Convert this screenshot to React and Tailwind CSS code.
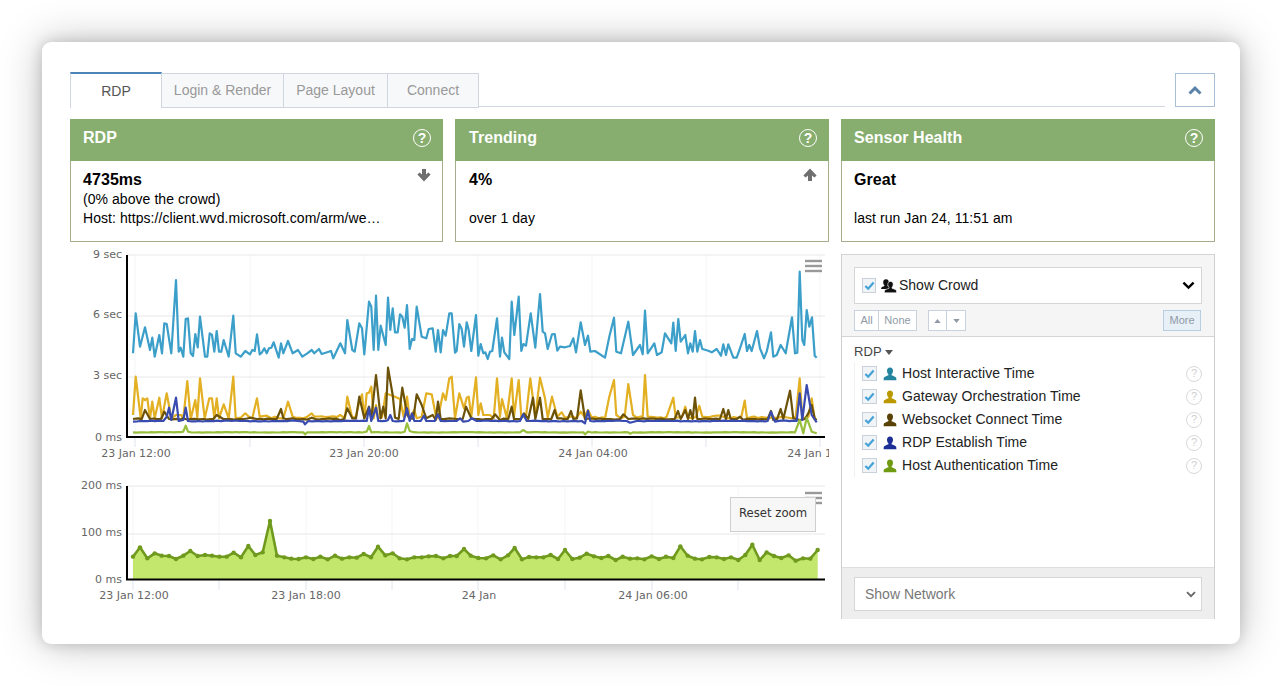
import React from "react";

const Z3X = (x) => 70 + x / 3;
const Z4X = (x) => 450 + x / 3;
const Y = (y) => 245 + y / 3;

function organic(pts, base, amp) {
  if (base === null) return pts;
  const spiked = [];
  pts.forEach((a, i) => {
    spiked.push(a);
    const b = pts[i + 1];
    if (!b) return;
    if (b[0] - a[0] > 24) {
      if (Math.abs(a[1] - base) > 4) spiked.push([a[0] + 10, base]);
      if (Math.abs(b[1] - base) > 4) spiked.push([b[0] - 10, base]);
    }
  });
  const out = [];
  spiked.forEach((a, i) => {
    out.push(a);
    const b = spiked[i + 1];
    if (!b) return;
    if (b[0] - a[0] > 20) {
      for (let x = a[0] + 11; x < b[0] - 6; x += 11) {
        out.push([x, base + amp * Math.sin(x * 0.73) * Math.cos(x * 0.19)]);
      }
    }
  });
  return out;
}

const line = (a, b, base = null, amp = 0) =>
  [
    ...organic(a, base, amp).map(([x, y]) => [Z3X(x), Y(y)]),
    ...organic(b, base, amp).map(([x, y]) => [Z4X(x), Y(y)]),
  ]
    .map((p) => p.map((n) => n.toFixed(1)).join(","))
    .join(" ");

const blue = line(
  [[189,325],[197,205],[210,305],[225,247],[240,315],[247,278],[254,335],[268,270],[276,325],[283,235],[290,237],[304,325],[318,105],[326,320],[332,308],[340,335],[347,222],[354,220],[362,325],[369,333],[376,267],[383,307],[390,215],[405,335],[412,335],[419,265],[426,270],[433,320],[440,258],[447,320],[454,320],[461,285],[476,335],[490,212],[497,325],[512,335],[526,318],[540,328],[547,315],[554,318],[561,268],[569,328],[576,322],[583,310],[590,325],[597,310],[604,308],[611,292],[626,338],[633,295],[640,325],[654,288],[668,325],[684,315],[697,335],[712,325],[725,315],[733,325],[747,312],[755,327],[783,318],[790,340],[811,295],[825,325],[832,225],[847,315],[854,320],[868,235],[876,250],[883,328],[897,170],[904,185],[911,315],[918,152],[925,315],[932,242],[947,300],[954,158],[961,255],[968,190],[975,262],[983,262],[990,208],[997,215],[1004,248],[1011,180],[1019,312],[1026,282],[1033,285],[1040,185],[1055,275],[1069,280],[1076,252],[1088,250],[1097,320],[1104,255],[1112,322],[1119,255],[1127,272],[1138,205]],
  [[5,205],[15,323],[20,318],[28,237],[35,252],[42,305],[50,232],[56,255],[64,318],[78,210],[85,332],[92,297],[100,325],[106,322],[113,342],[120,320],[127,318],[141,220],[150,335],[156,278],[163,322],[178,342],[185,170],[193,270],[206,155],[214,318],[220,297],[228,302],[242,205],[256,308],[270,147],[278,260],[285,265],[293,312],[306,268],[314,267],[322,317],[330,305],[345,307],[360,303],[370,280],[378,322],[392,232],[405,300],[414,272],[421,320],[435,318],[465,338],[478,275],[492,218],[499,320],[513,325],[535,230],[549,330],[570,300],[578,328],[585,197],[593,325],[613,295],[621,330],[635,322],[645,265],[664,295],[670,233],[677,318],[685,222],[692,290],[706,270],[714,325],[721,295],[728,320],[735,258],[742,320],[750,285],[757,312],[775,317],[785,322],[800,312],[813,332],[820,298],[828,330],[835,298],[850,338],[860,338],[870,310],[884,267],[891,318],[898,300],[905,318],[921,258],[930,310],[942,340],[950,320],[963,262],[970,335],[980,330],[992,300],[1007,325],[1026,217],[1035,325],[1042,323],[1049,80],[1057,285],[1063,300],[1070,195],[1078,245],[1086,217],[1094,332],[1100,338]]
);
const gold = line(
  [[189,510],[197,395],[212,520],[218,460],[225,465],[232,460],[240,520],[247,470],[254,520],[268,458],[276,520],[290,445],[304,520],[318,510],[333,510],[340,520],[352,408],[362,522],[376,465],[382,518],[390,400],[404,520],[418,460],[426,460],[433,520],[440,460],[447,520],[461,478],[476,520],[490,395],[497,520],[512,518],[526,505],[540,518],[547,520],[561,460],[569,515],[590,512],[604,520],[626,520],[640,520],[654,470],[668,515],[700,520],[712,515],[725,505],[733,515],[780,515],[811,510],[825,520],[832,455],[847,520],[868,470],[876,448],[883,520],[890,445],[897,443],[904,425],[911,520],[918,480],[925,520],[947,445],[961,450],[975,455],[990,462],[1011,455],[1019,520],[1033,495],[1040,520],[1055,515],[1069,445],[1085,448],[1097,510],[1104,520],[1119,445],[1127,465],[1138,400]],
  [[5,395],[15,520],[28,445],[42,490],[50,458],[56,455],[64,515],[78,397],[85,510],[92,475],[100,510],[120,510],[141,400],[150,515],[156,462],[170,518],[185,400],[192,515],[206,405],[214,515],[228,515],[241,400],[256,515],[270,398],[285,460],[293,518],[306,455],[322,515],[335,502],[345,518],[378,520],[392,500],[414,495],[435,515],[465,520],[478,455],[492,405],[499,510],[513,520],[535,417],[549,510],[570,515],[578,515],[585,390],[593,515],[621,518],[650,515],[670,458],[677,518],[706,485],[714,518],[748,482],[757,515],[800,512],[830,520],[884,467],[891,520],[1026,520],[1049,400],[1057,520],[1085,460],[1094,525]],
  516, 4
);
const brown = line(
  [[189,522],[204,520],[225,495],[240,522],[283,500],[297,522],[340,520],[400,522],[440,510],[460,522],[510,522],[540,518],[560,522],[620,522],[633,492],[640,520],[668,520],[725,518],[755,522],[811,525],[832,490],[847,520],[868,455],[883,520],[897,485],[904,520],[918,390],[932,520],[940,485],[947,520],[954,368],[968,450],[975,518],[997,428],[1012,510],[1019,520],[1040,448],[1055,480],[1069,520],[1088,510],[1097,525],[1104,470],[1112,522],[1138,520]],
  [[20,522],[48,485],[64,520],[135,508],[150,525],[185,485],[192,522],[222,505],[235,522],[249,458],[256,522],[270,458],[278,522],[314,495],[322,520],[363,498],[370,522],[392,436],[405,522],[520,508],[535,522],[684,498],[692,522],[706,495],[714,522],[721,495],[728,522],[735,458],[742,522],[820,492],[828,522],[835,495],[842,522],[870,515],[880,525],[963,498],[970,525],[992,492],[1000,522],[1020,437],[1030,520],[1049,525],[1075,505],[1085,480],[1094,520],[1100,525]],
  522, 2
);
const navy = line(
  [[189,530],[280,528],[290,515],[297,488],[304,525],[318,458],[326,528],[340,525],[347,488],[354,528],[700,530],[705,538],[715,528],[890,528],[897,488],[904,528],[918,488],[925,528],[954,525],[961,510],[968,528],[1011,490],[1019,528],[1026,505],[1033,528],[1062,512],[1069,528],[1104,508],[1112,528],[1138,528]],
  [[0,528],[30,520],[40,530],[65,520],[80,528],[220,508],[230,528],[405,535],[414,497],[421,528],[540,533],[560,528],[963,500],[975,530],[1040,528],[1049,445],[1057,525],[1070,420],[1085,510],[1100,532]],
  528, 1.5
);
const lime = line(
  [[189,562],[340,560],[347,542],[354,560],[700,562],[705,568],[712,562],[890,560],[897,543],[904,562],[1004,560],[1011,535],[1019,558],[1138,562]],
  [[0,562],[210,562],[220,555],[230,562],[400,562],[405,568],[414,560],[535,562],[540,566],[550,562],[1035,562],[1049,525],[1060,565],[1070,518],[1085,560],[1100,565]],
  562, 1
);

const lowerPts = [
  ...[[189,260],[210,232],[232,265],[254,250],[275,257],[297,258],[318,267],[340,257],[361,243],[383,258],[405,255],[426,257],[448,260],[470,260],[491,248],[513,262],[535,228],[556,255],[578,247],[600,153],[621,257],[643,262],[664,266],[686,267],[708,262],[730,267],[751,260],[773,268],[795,257],[816,266],[838,262],[860,263],[881,252],[903,262],[924,230],[946,256],[968,250],[989,265],[1011,268],[1033,262],[1055,262],[1076,259],[1098,258],[1120,265]].map(([x, y]) => [70 + x / 3, 470 + y / 3]),
  ...[[0,258],[20,258],[42,237],[62,257],[85,264],[108,265],[130,256],[152,268],[174,256],[194,234],[216,268],[237,261],[259,262],[280,262],[302,255],[324,267],[345,240],[367,267],[389,263],[410,251],[432,259],[454,264],[475,258],[497,270],[518,260],[540,266],[562,265],[583,268],[605,259],[627,267],[648,260],[670,264],[691,229],[713,257],[735,266],[756,268],[778,261],[800,262],[822,267],[843,262],[865,270],[886,255],[907,224],[929,270],[950,247],[972,258],[994,264],[1016,256],[1037,272],[1059,265],[1081,266],[1103,240]].map(([x, y]) => [450 + x / 3, 470 + y / 3]),
];
const lowerLine = lowerPts.map((p) => p.map((n) => n.toFixed(1)).join(",")).join(" ");

const axisFont = { fontFamily: "'DejaVu Sans', sans-serif", fontSize: 11, fill: "#666" };

function Help({ muted }) {
  return muted ? (
    <span className="flex h-[16px] w-[16px] items-center justify-center rounded-full border border-[#d9d9d9] text-[11px] leading-none text-[#cfcfcf]">?</span>
  ) : (
    <span className="flex h-[18px] w-[18px] items-center justify-center rounded-full border border-white text-[14px] font-bold leading-none text-white">?</span>
  );
}

const ArrowDown = () => (
  <svg viewBox="0 0 14 14" className="h-[14px] w-[14px]" fill="#6f6f6f">
    <path d="M5 1 H9 V6.5 L11.4 4.4 L13.6 6.6 L7 13.4 L0.4 6.6 L2.6 4.4 L5 6.5 Z" />
  </svg>
);
const ArrowUp = () => (
  <svg viewBox="0 0 14 14" className="h-[14px] w-[14px]" fill="#6f6f6f">
    <path d="M5 13 H9 V7.5 L11.4 9.6 L13.6 7.4 L7 0.6 L0.4 7.4 L2.6 9.6 L5 7.5 Z" />
  </svg>
);

function Card({ title, value, arrow, l2, l3, mid }) {
  return (
    <div className="flex h-[123px] flex-col border border-[#a4ae8c] bg-white">
      <div className={"-mx-px -mt-px flex h-[42px] shrink-0 items-center justify-between bg-[#87ae6e] pb-[4px] " + (mid ? "pl-[14px] pr-[12px] text-white" : "pl-[13px] pr-[12px] text-white")}>
        <span className="text-[16px] font-bold tracking-[0.05px]">{title}</span>
        <Help />
      </div>
      <div className={"relative flex-1 pt-[9px] text-[14px] leading-[19px] tracking-[0.06px] text-black " + (mid ? "pl-[13px]" : "pl-[12px]")}>
        <div className="text-[16px] font-bold leading-[19px]">{value}</div>
        <div className="mt-px h-[19px]">{l2}</div>
        <div>{l3}</div>
        <span className={"absolute top-[7px] " + (mid ? "right-[11px]" : "right-[11px]")}>{arrow}</span>
      </div>
    </div>
  );
}

function Check({ small }) {
  return (
    <span className={"flex shrink-0 items-center justify-center border border-[#c9d2da] bg-[#f1f4f6] " + (small ? "h-[15px] w-[14px]" : "h-[15px] w-[15px]")}>
      <svg viewBox="0 0 12 12" className="h-[11px] w-[11px]">
        <path d="M1.5 6.5 L4.6 9.5 L10.5 2.8" fill="none" stroke="#45a3d8" strokeWidth="2.5" />
      </svg>
    </span>
  );
}

function Person({ color }) {
  return (
    <svg viewBox="0 0 14 14" className="h-[14px] w-[14px] shrink-0" fill={color}>
      <path d="M7 0.5 C9 0.5 10 2 10 3.8 C10 5.4 9.4 6.6 8.6 7.3 L8.6 8.3 C10.5 9 12.6 9.8 13.2 10.8 L13.4 13.2 L0.6 13.2 L0.8 10.8 C1.4 9.8 3.5 9 5.4 8.3 L5.4 7.3 C4.6 6.6 4 5.4 4 3.8 C4 2 5 0.5 7 0.5 Z" />
    </svg>
  );
}

function Crowd() {
  return (
    <svg viewBox="0 0 16 14" className="h-[14px] w-[16px] shrink-0" fill="#111">
      <path d="M5 0.3 C6.8 0.3 7.8 1.6 7.8 3.2 C7.8 4.7 7.2 5.7 6.6 6.3 L6.6 7.1 C8 7.6 9.2 8.1 9.8 8.9 L9.8 10 L0.2 10 L0.2 8.9 C0.8 8.1 2 7.6 3.4 7.1 L3.4 6.3 C2.8 5.7 2.2 4.7 2.2 3.2 C2.2 1.6 3.2 0.3 5 0.3 Z" />
      <path d="M9.5 2.4 C11.2 2.4 12.2 3.7 12.2 5.3 C12.2 6.8 11.6 7.8 11 8.4 L11 9.3 C12.7 9.9 14.8 10.5 15.4 11.4 L15.6 13.8 L3.4 13.8 L3.6 11.4 C4.2 10.5 6.3 9.9 8 9.3 L8 8.4 C7.4 7.8 6.8 6.8 6.8 5.3 C6.8 3.7 7.8 2.4 9.5 2.4 Z" stroke="#fff" strokeWidth="0.6" />
    </svg>
  );
}

const metrics = [
  ["Host Interactive Time", "#23849f"],
  ["Gateway Orchestration Time", "#bb9800"],
  ["Websocket Connect Time", "#5a4205"],
  ["RDP Establish Time", "#1d2f96"],
  ["Host Authentication Time", "#6f9a12"],
];

const SmallBtn = ({ children, className = "" }) => (
  <span className={"flex h-[21px] items-center justify-center border border-[#c8d3df] bg-white text-[11px] text-[#8f9aa6] " + className}>{children}</span>
);

export default function App() {
  return (
    <div className="h-[686px] w-full overflow-hidden bg-white pl-[42px] pr-[40px] pt-[42px] font-['Liberation_Sans',Arial,sans-serif]">
      <div className="h-[602px] rounded-[9px] bg-white pl-[28px] pr-[25px] pt-[30px] shadow-[0_0_14px_rgba(0,0,0,0.16),0_0_42px_rgba(0,0,0,0.26)]">
        {/* Tabs */}
        <div className="flex h-[36px] items-start">
          <div className="flex h-[36px] text-[14px]">
            <div className="flex h-[36px] w-[92px] items-center justify-center border-l border-r border-t-2 border-[#cfd6e0] border-t-[#4d84b8] bg-white text-[#555]">RDP</div>
            {[["Login & Render", "w-[123px]"], ["Page Layout", "w-[105px]"], ["Connect", "w-[92px]"]].map(([t, w]) => (
              <div key={t} className={"mt-px -ml-px flex h-[35px] items-center justify-center border border-[#cfd6e0] bg-[#f7f8fa] text-[#999] " + w}>{t}</div>
            ))}
          </div>
          <div className="h-[35px] flex-1 border-b border-[#cfd6e0]" />
          <div className="ml-[10px] mt-px flex h-[34px] w-[40px] items-center justify-center border border-[#a9bfd6] bg-white">
            <svg viewBox="0 0 14 9" className="h-[9px] w-[14px]">
              <path d="M1.5 7.5 L7 2.2 L12.5 7.5" fill="none" stroke="#5b82a8" strokeWidth="3" />
            </svg>
          </div>
        </div>

        {/* Cards */}
        <div className="mt-[11px] grid grid-cols-[373px_374px_374px] gap-x-[12px]">
          <Card title="RDP" value="4735ms" arrow={<ArrowDown />} l2="(0% above the crowd)" l3="Host: https://client.wvd.microsoft.com/arm/we…" />
          <Card mid title="Trending" value="4%" arrow={<ArrowUp />} l2="" l3="over 1 day" />
          <Card title="Sensor Health" value="Great" l2="" l3="last run Jan 24, 11:51 am" />
        </div>

        {/* Lower */}
        <div className="mt-[12px] grid grid-cols-[759px_374px] gap-x-[12px]">
          <div className="relative">
            <svg viewBox="70 254 759 211" className="block h-[211px] w-[759px] overflow-visible">
              <defs>
                <clipPath id="clipTop"><rect x="60" y="240" width="769" height="230" /></clipPath>
              </defs>
              {[135, 250, 364, 478, 592, 706, 820].map((x) => (
                <g key={x}>
                  <line x1={x} x2={x} y1="255" y2="437" stroke="#f3f5f9" />
                  <line x1={x} x2={x} y1="437" y2="447" stroke="#dfe4ec" />
                </g>
              ))}
              {[255, 316, 377].map((y) => (
                <line key={y} x1="127" x2="825" y1={y} y2={y} stroke="#e8e8ea" />
              ))}
              <polyline points={blue} fill="none" stroke="#3b9fc9" strokeWidth="2.2" strokeLinejoin="round" />
              <polyline points={gold} fill="none" stroke="#e2b022" strokeWidth="2.2" strokeLinejoin="round" />
              <polyline points={brown} fill="none" stroke="#6b5208" strokeWidth="2.2" strokeLinejoin="round" />
              <polyline points={navy} fill="none" stroke="#3a4bb0" strokeWidth="2.2" strokeLinejoin="round" />
              <polyline points={lime} fill="none" stroke="#97bf3d" strokeWidth="2.2" strokeLinejoin="round" />
              <line x1="127" x2="127" y1="255" y2="438" stroke="#000" strokeWidth="2" />
              <line x1="126" x2="825" y1="437" y2="437" stroke="#000" strokeWidth="2" />
              {[["9 sec", 258], ["6 sec", 318], ["3 sec", 379], ["0 ms", 441]].map(([t, y]) => (
                <text key={t} x="122" y={y} textAnchor="end" style={axisFont}>{t}</text>
              ))}
              <g clipPath="url(#clipTop)">
                {[["23 Jan 12:00", 136], ["23 Jan 20:00", 364], ["24 Jan 04:00", 593], ["24 Jan 12:00", 822]].map(([t, x]) => (
                  <text key={t} x={x} y="457" textAnchor="middle" style={axisFont}>{t}</text>
                ))}
              </g>
              {[261, 266, 271].map((y) => (
                <line key={y} x1="805" x2="822" y1={y} y2={y} stroke="#999" strokeWidth="2.4" />
              ))}
            </svg>
            <svg viewBox="70 465 759 155" className="block h-[155px] w-[759px] overflow-visible">
              {[133, 219, 306, 392, 478, 565, 652, 738].map((x) => (
                <g key={x}>
                  <line x1={x} x2={x} y1="486" y2="579" stroke="#f3f5f9" />
                  <line x1={x} x2={x} y1="579" y2="590" stroke="#dfe4ec" />
                </g>
              ))}
              {[486, 534].map((y) => (
                <line key={y} x1="127" x2="825" y1={y} y2={y} stroke="#e8e8ea" />
              ))}
              <polygon points={`133,579 ${lowerLine} 817.7,579`} fill="#c3e76d" />
              <polyline points={lowerLine} fill="none" stroke="#6f9a1e" strokeWidth="2.6" strokeLinejoin="round" />
              {lowerPts.map(([x, y], i) => (
                <circle key={i} cx={x} cy={y} r="2.2" fill="#6f9a1e" />
              ))}
              <line x1="127" x2="127" y1="486" y2="580" stroke="#000" strokeWidth="2" />
              <line x1="126" x2="825" y1="579.5" y2="579.5" stroke="#000" strokeWidth="2" />
              {[["200 ms", 489], ["100 ms", 536], ["0 ms", 583]].map(([t, y]) => (
                <text key={t} x="122" y={y} textAnchor="end" style={axisFont}>{t}</text>
              ))}
              {[["23 Jan 12:00", 134], ["23 Jan 18:00", 306], ["24 Jan", 479], ["24 Jan 06:00", 653]].map(([t, x]) => (
                <text key={t} x={x} y="599" textAnchor="middle" style={axisFont}>{t}</text>
              ))}
              {[493, 498, 503].map((y) => (
                <line key={y} x1="805" x2="822" y1={y} y2={y} stroke="#999" strokeWidth="2.4" />
              ))}
            </svg>
            <div className="absolute left-[660px] top-[243px] flex h-[35px] w-[86px] items-center justify-center border border-[#cfcfcf] bg-[#f7f7f7] pb-[2px] font-['DejaVu_Sans',sans-serif] text-[11.7px] text-[#333]">Reset zoom</div>
          </div>

          {/* Right panel */}
          <div className="flex h-[365px] flex-col border-l border-r border-[#cfcfcf]">
            <div className="h-[83px] border-b border-t border-[#d4d4d4] bg-[#f5f5f5] pl-[12px] pr-[12px] pt-[12px]">
              <div className="flex h-[37px] items-center border border-[#d6d6d6] bg-white pl-[7px] pr-[6px] text-[14px] text-[#222]">
                <Check small />
                <span className="ml-[5px]"><Crowd /></span>
                <span className="ml-[2px] flex-1">Show Crowd</span>
                <svg viewBox="0 0 14 9" className="h-[9px] w-[13px]">
                  <path d="M1.5 1.5 L7 6.8 L12.5 1.5" fill="none" stroke="#000" strokeWidth="2.6" />
                </svg>
              </div>
              <div className="mt-[6px] flex">
                <SmallBtn className="w-[25px]">All</SmallBtn>
                <SmallBtn className="-ml-px w-[39px]">None</SmallBtn>
                <SmallBtn className="ml-[11px] w-[19px]">
                  <svg viewBox="0 0 8 5" className="h-[4px] w-[7px]" fill="#8f9aa6"><path d="M4 0 L8 5 L0 5 Z" /></svg>
                </SmallBtn>
                <SmallBtn className="-ml-px w-[20px]">
                  <svg viewBox="0 0 8 5" className="h-[4px] w-[7px]" fill="#8f9aa6"><path d="M0 0 L8 0 L4 5 Z" /></svg>
                </SmallBtn>
                <span className="flex-1" />
                <SmallBtn className="mr-px w-[38px] !bg-[#e7eff7] !border-[#b9cde0]">More</SmallBtn>
              </div>
            </div>
            <div className="flex-1 bg-white pl-[12px] pr-[12px] pt-[7px]">
              <div className="flex h-[16px] items-center text-[13px] tracking-[0.1px] text-[#444]">
                RDP
                <svg viewBox="0 0 8 5" className="ml-[3px] h-[5px] w-[8px]" fill="#555"><path d="M0 0 L8 0 L4 5 Z" /></svg>
              </div>
              <div className="mt-[2px] border-l border-[#f0f0f0] pl-[7px]">
                {metrics.map(([t, c]) => (
                  <div key={t} className="flex h-[23px] items-center text-[14px] tracking-[0.05px] text-[#222]">
                    <Check />
                    <span className="ml-[6px]"><Person color={c} /></span>
                    <span className="ml-[5px] flex-1">{t}</span>
                    <Help muted />
                  </div>
                ))}
              </div>
            </div>
            <div className="h-[52px] border-t border-[#dedede] bg-[#eeeeee] pl-[12px] pr-[12px] pt-[9px]">
              <div className="flex h-[34px] items-center justify-between border border-[#d6d6d6] bg-white pl-[10px] pr-[5px] text-[14px] text-[#777]">
                Show Network
                <svg viewBox="0 0 10 7" className="h-[7px] w-[10px]">
                  <path d="M1 1.2 L5 5.2 L9 1.2" fill="none" stroke="#666" strokeWidth="1.8" />
                </svg>
              </div>
            </div>
          </div>
        </div>
      </div>
    </div>
  );
}
